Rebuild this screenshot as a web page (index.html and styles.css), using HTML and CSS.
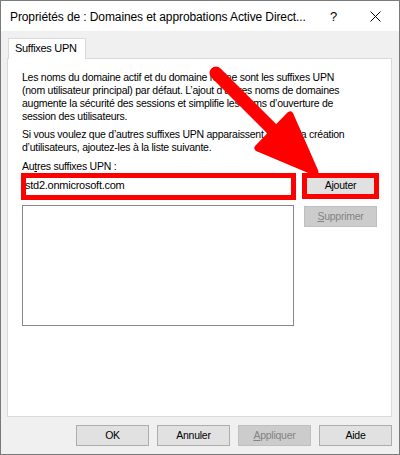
FILE: index.html
```html
<!DOCTYPE html>
<html lang="fr">
<head>
<meta charset="utf-8">
<title>Propriétés</title>
<link rel="stylesheet" href="styles.css">
</head>
<body>
<div class="window">
  <div class="titlebar">
    <span class="title">Propriétés de : Domaines et approbations Active Direct...</span>
    <span class="help">?</span>
    <span class="close"><svg width="11" height="11" viewBox="0 0 11 11"><path d="M0.5 0.5L10.5 10.5M10.5 0.5L0.5 10.5" stroke="#000" stroke-width="1" fill="none"/></svg></span>
  </div>
  <div class="body">
    <div class="tabs"><div class="tab">Suffixes UPN</div></div>
    <div class="panel">
      <p class="para">Les noms du domaine actif et du domaine racine sont les suffixes UPN<br>(nom utilisateur principal) par défaut. L’ajout d’autres noms de domaines<br>augmente la sécurité des sessions et simplifie les noms d’ouverture de<br>session des utilisateurs.</p>
      <p class="para gap">Si vous voulez que d’autres suffixes UPN apparaissent lors de la création<br>d’utilisateurs, ajoutez-les à la liste suivante.</p>
      <div class="label">Au<u>t</u>res suffixes UPN :</div>
      <div class="row first">
        <div class="field marked-field">std2.onmicrosoft.com</div>
        <div class="btn add marked-btn">A<u>j</u>outer</div>
      </div>
      <div class="row second">
        <div class="listbox"></div>
        <div class="btn disabled remove"><u>S</u>upprimer</div>
      </div>
    </div>
    <div class="footer">
      <div class="btn">OK</div>
      <div class="btn">Annuler</div>
      <div class="btn disabled"><u>A</u>ppliquer</div>
      <div class="btn">Aide</div>
    </div>
  </div>
  <svg class="arrow" width="400" height="455" viewBox="0 0 400 455">
    <line x1="216" y1="73" x2="282" y2="139" stroke="#ff0000" stroke-width="13" stroke-linecap="round"/>
    <polygon points="315,172 290,115 258,148" fill="#ff0000" stroke="#ff0000" stroke-width="7" stroke-linejoin="round"/>
  </svg>
</div>
</body>
</html>
```
FILE: styles.css
```css
* { box-sizing: border-box; }
html, body { margin: 0; padding: 0; background: #ffffff; }
body { font-family: "Liberation Sans", Arial, sans-serif; font-size: 10.5px; letter-spacing: -0.25px; color: #000; }

.window {
  position: relative;
  width: 400px;
  height: 455px;
  border: 1px solid #7a7a7a;
  background: #f0f0f0;
  display: flex;
  flex-direction: column;
  overflow: hidden;
}

.titlebar {
  height: 30px;
  background: #ffffff;
  display: flex;
  align-items: center;
  padding-left: 9px;
  flex: none;
}
.title { font-size: 12px; letter-spacing: -0.1px; white-space: nowrap; width: 318px; overflow: hidden; padding-top: 1px; }
.help { font-size: 13px; letter-spacing: 0; width: 41px; padding-left: 2px; padding-top: 1px; }
.close { display: flex; align-items: center; padding-left: 1px; }

.body {
  flex: 1;
  padding: 7px 7px 0 6px;
  display: flex;
  flex-direction: column;
}

.tabs { display: flex; height: 20px; }
.tab {
  position: relative;
  z-index: 1;
  margin-left: 1px;
  width: 78px;
  height: 21px;
  border: 1px solid #d9d9d9;
  border-bottom: none;
  background: #ffffff;
  padding-left: 6px;
  line-height: 19px;
  font-size: 11px;
  letter-spacing: -0.3px;
}

.panel {
  height: 359px;
  border: 1px solid #d9d9d9;
  background: #ffffff;
  padding: 12px 14px 0 14px;
  flex: none;
}

.para { margin: 0; line-height: 13px; white-space: nowrap; }
.para.gap { margin-top: 5px; }
.label { margin-top: 6px; line-height: 13px; }
.label u, .btn u { text-decoration: underline; }

.row { display: flex; align-items: flex-start; }
.row.first { margin-top: 2px; }
.row.second { margin-top: 9px; }

.field {
  width: 274px;
  height: 21px;
  border: 1px solid #7a7a7a;
  background: #fff;
  padding-left: 2px;
  line-height: 19px;
  font-size: 11px;
}

.btn {
  width: 73px;
  height: 21px;
  border: 1px solid #adadad;
  background: #e1e1e1;
  text-align: center;
  line-height: 19px;
  flex: none;
}
.btn.disabled { background: #cccccc; border-color: #bfbfbf; color: #838383; }
.add { margin-left: 9px; }
.remove { margin-left: 10px; margin-top: 1px; }

.listbox {
  width: 273px;
  height: 121px;
  border: 1px solid #828790;
  background: #fff;
}

.footer {
  display: flex;
  justify-content: flex-end;
  gap: 8px;
  margin-top: 8px;
}

.marked-field, .marked-btn { position: relative; }
.marked-field::after {
  content: "";
  position: absolute;
  top: -3px; left: -2px; right: -2px; bottom: -5px;
  border: 5px solid #ff0000;
}
.marked-btn::after {
  content: "";
  position: absolute;
  top: -3px; left: -3px; right: -3px; bottom: -4px;
  border: 5px solid #ff0000;
}

.arrow { position: absolute; top: -1px; left: -1px; pointer-events: none; }
```
